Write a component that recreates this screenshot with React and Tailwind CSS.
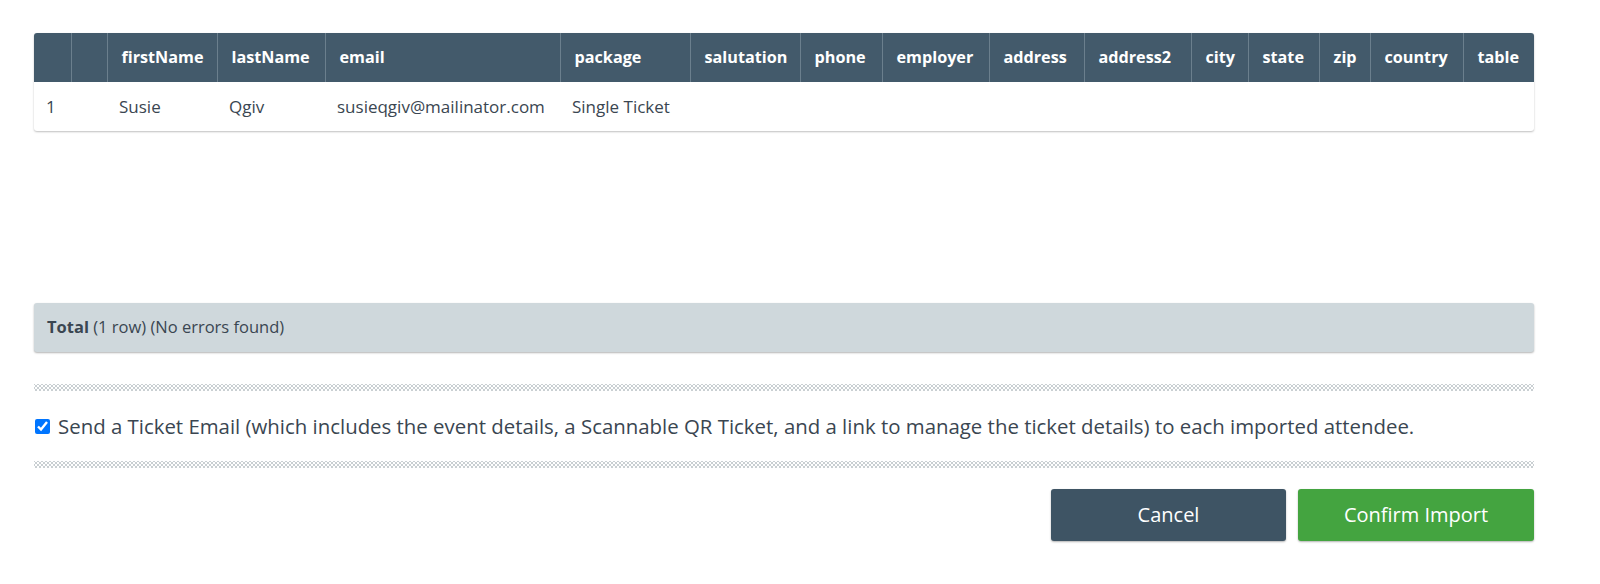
import { useState } from 'react'

const columns = [
  { key: 'idx', label: '', width: 37 },
  { key: 'blank', label: '', width: 36 },
  { key: 'firstName', label: 'firstName', width: 110 },
  { key: 'lastName', label: 'lastName', width: 108 },
  { key: 'email', label: 'email', width: 235 },
  { key: 'package', label: 'package', width: 130 },
  { key: 'salutation', label: 'salutation', width: 110 },
  { key: 'phone', label: 'phone', width: 82 },
  { key: 'employer', label: 'employer', width: 107 },
  { key: 'address', label: 'address', width: 95 },
  { key: 'address2', label: 'address2', width: 107 },
  { key: 'city', label: 'city', width: 57 },
  { key: 'state', label: 'state', width: 71 },
  { key: 'zip', label: 'zip', width: 51 },
  { key: 'country', label: 'country', width: 93 },
  { key: 'table', label: 'table', width: 71 },
]

const rows = [
  {
    idx: '1',
    blank: '',
    firstName: 'Susie',
    lastName: 'Qgiv',
    email: 'susieqgiv@mailinator.com',
    package: 'Single Ticket',
  },
]

function Dots() {
  return (
    <div className="h-[7px] w-full bg-[radial-gradient(circle,#c9cfd2_0.9px,transparent_1.1px),radial-gradient(circle,#c9cfd2_0.9px,transparent_1.1px)] bg-[length:4px_4px] bg-[position:0_0,2px_2px]"></div>
  )
}

export default function App() {
  const [sendEmail, setSendEmail] = useState(true)

  return (
    <div className="h-[584px] w-[1600px] overflow-hidden bg-white px-[34px] pt-[33px] font-['Open_Sans',sans-serif] text-[#3a4651]">
      <div className="w-[1500px] overflow-hidden rounded-[3px] bg-white shadow-[0_1px_2px_rgba(0,0,0,0.25)]">
        <table className="w-[1500px] table-fixed border-collapse">
          <colgroup>
            {columns.map((c) => (
              <col key={c.key} style={{ width: c.width }} />
            ))}
          </colgroup>
          <thead>
            <tr className="h-[49px] bg-[#435a6b]">
              {columns.map((c, i) => (
                <th
                  key={c.key}
                  className={`overflow-hidden pl-[14px] pr-0 text-left text-[16.2px] font-bold text-white whitespace-nowrap ${
                    i < columns.length - 1 ? 'border-r border-[#6b7f8d]' : ''
                  }`}
                >
                  {c.label}
                </th>
              ))}
            </tr>
          </thead>
          <tbody>
            {rows.map((r) => (
              <tr key={r.idx} className="h-[49px]">
                {columns.map((c) => (
                  <td key={c.key} className="overflow-hidden pl-3 pr-0 text-[17px] whitespace-nowrap">
                    {r[c.key] || ''}
                  </td>
                ))}
              </tr>
            ))}
          </tbody>
        </table>
      </div>

      <div className="mt-[172px] flex h-[49px] w-[1500px] items-center rounded-[3px] bg-[#cfd8dc] px-[13px] text-[16.5px] shadow-[0_1px_2px_rgba(0,0,0,0.3)]">
        <span className="font-bold">Total</span>
        <span>&nbsp;(1 row) (No errors found)</span>
      </div>

      <div className="mt-[32px] w-[1500px]">
        <Dots />
        <label className="flex h-[70px] items-center gap-[8px] text-[20.4px]">
          <input
            type="checkbox"
            checked={sendEmail}
            onChange={(e) => setSendEmail(e.target.checked)}
            className="m-0 ml-[1px] h-[15px] w-[15px]"
          />
          <span>
            Send a Ticket Email (which includes the event details, a Scannable QR Ticket, and a link to manage the ticket details) to each imported attendee.
          </span>
        </label>
        <Dots />
      </div>

      <div className="mt-[21px] flex w-[1500px] justify-end gap-[12px]">
        <button className="h-[52px] w-[235px] rounded-[3px] bg-[#3e5464] text-[20px] text-white shadow-[0_1px_2px_rgba(0,0,0,0.3)]">
          Cancel
        </button>
        <button className="h-[52px] w-[236px] rounded-[3px] bg-[#44a440] text-[20px] text-white shadow-[0_1px_2px_rgba(0,0,0,0.3)]">
          Confirm Import
        </button>
      </div>
    </div>
  )
}
